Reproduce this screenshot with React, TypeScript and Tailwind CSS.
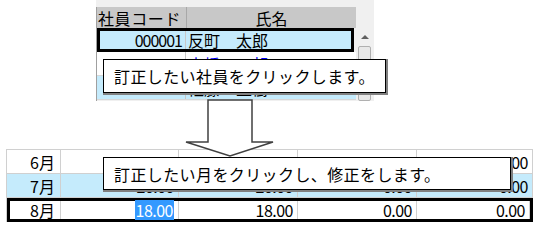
import React from 'react';

const FONT = { fontFamily: '"Noto Sans CJK JP", "Noto Sans", sans-serif' };

const topRows = [
  { code: '000001', name: '反町　太郎', bg: 'bg-[#c5ebfc]', color: 'text-black', selected: true },
  { code: '000002', name: '高橋　一郎', bg: 'bg-white', color: 'text-[#0000ff]', selected: false },
  { code: '000003', name: '佐藤　正樹', bg: 'bg-[#c5ebfc]', color: 'text-black', selected: false },
];

const monthRows = [
  { month: '6月', vals: ['20.00', '20.00', '0.00', '0.00'], bg: 'bg-white', selected: false },
  { month: '7月', vals: ['20.00', '20.00', '0.00', '0.00'], bg: 'bg-[#c5ebfc]', selected: false },
  { month: '8月', vals: ['18.00', '18.00', '0.00', '0.00'], bg: 'bg-white', selected: true },
];

function Tip({ text, className }: { text: string; className: string }) {
  return (
    <div
      className={`absolute bg-white border border-black shadow-[1px_1px_0_1px_#808080] flex items-center pl-[10px] text-[16px] tracking-[0.4px] leading-none text-black ${className}`}
    >
      {text}
    </div>
  );
}

export default function App() {
  return (
    <div className="relative w-[542px] h-[226px] bg-white overflow-hidden" style={FONT}>
      {/* 社員一覧 */}
      <div className="ml-[96px] w-[278px] h-[101px] bg-[#f0f0f0] flex pt-[7px]">
        <div className="w-[260px] border-l border-[#a0a0a0] flex flex-col">
          <div className="flex h-[21px] bg-[#c8c8c8] text-[16px] leading-none text-black">
            <div className="w-[90px] border-r border-[#a8a8a8] flex items-center pl-[1px] tracking-[0.6px] overflow-hidden whitespace-nowrap">社員コード</div>
            <div className="flex-1 flex items-center justify-center">氏名</div>
          </div>
          {topRows.map((r) => (
            <div
              key={r.code}
              className={`flex h-[24px] text-[16px] leading-none ${r.bg} ${r.color} ${r.selected ? 'border-[3px] border-black mr-[2px]' : 'border-b border-[#d8d8d8]'}`}
            >
              <div className={`${r.selected ? 'w-[86px]' : 'w-[89px]'} flex items-center justify-end pr-[3px] border-r border-[#c8c8c8] tracking-[-1px]`}>{r.code}</div>
              <div className="flex-1 flex items-center pl-[2px] whitespace-nowrap">{r.name}</div>
            </div>
          ))}
        </div>
        {/* scrollbar */}
        <div className="w-[17px] flex flex-col pt-[21px]">
          <div className="h-[18px] flex items-center justify-center">
            <div className="w-0 h-0 border-l-[4px] border-r-[4px] border-b-[4px] border-l-transparent border-r-transparent border-b-[#606060]" />
          </div>
          <div className="flex-1 mx-[2px] bg-[#e8e8e8] border border-[#b0b0b0] rounded-[2px]" />
        </div>
      </div>

      {/* 月別一覧 */}
      <div className="ml-[6px] mt-[48px] w-[527px] border-t border-l border-[#d0d0d0] flex flex-col text-[16px] leading-none text-black">
        {monthRows.map((r) => (
          <div
            key={r.month}
            className={`flex h-[24px] ${r.bg} ${r.selected ? 'border-[3px] border-black' : 'border-b border-[#d0d0d0]'}`}
          >
            <div className={`${r.selected ? 'w-[51px]' : 'w-[54px]'} flex items-center justify-end pr-[5px] border-r border-[#d0d0d0]`}>{r.month}</div>
            {r.vals.map((v, i) => (
              <div
                key={i}
                className={`${i === 3 ? 'flex-1' : i === 0 ? 'w-[118px]' : 'w-[119px]'} flex items-center justify-end pr-[4px] border-r border-[#d0d0d0] tracking-[-0.5px]`}
              >
                {r.selected && i === 0 ? (
                  <span className="bg-[#3399ff] text-white h-[20px] flex items-center px-[1px]">{v}</span>
                ) : (
                  v
                )}
              </div>
            ))}
          </div>
        ))}
      </div>

      {/* 矢印 */}
      <svg className="absolute left-[184px] top-[99px]" width="92" height="60" viewBox="0 0 92 60">
        <path
          d="M24 1 L68 1 L68 43 L89 43 L46 57 L2 43 L24 43 Z"
          fill="white"
          stroke="#404040"
          strokeWidth="1.5"
          strokeLinejoin="miter"
        />
      </svg>

      <Tip text="訂正したい社員をクリックします。" className="left-[103px] top-[59px] w-[283px] h-[34px]" />
      <Tip text="訂正したい月をクリックし、修正をします。" className="left-[103px] top-[157px] w-[408px] h-[33px]" />
    </div>
  );
}
